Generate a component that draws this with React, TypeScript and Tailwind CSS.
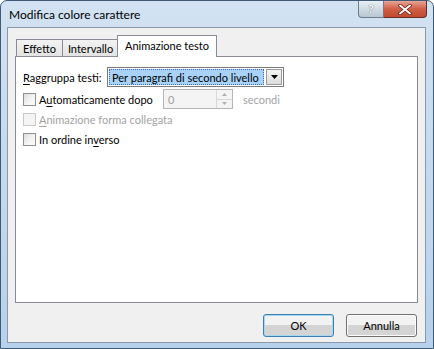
import React from "react";

const font = { fontFamily: 'Lato, "Noto Sans", sans-serif' };

function Check({ disabled, children }: { disabled?: boolean; children: React.ReactNode }) {
  return (
    <div className="flex items-center gap-[3px] whitespace-nowrap">
      <span
        className={`box-border h-[13px] w-[13px] shrink-0 border ${
          disabled
            ? "border-[#c9c9c9] bg-[#f4f4f4]"
            : "border-[#8e8f8f] bg-gradient-to-br from-[#dcdcdc] via-[#f2f2f2] to-[#fbfbfb]"
        }`}
      />
      <span className={disabled ? "text-[#a3a3a3]" : "text-black"}>{children}</span>
    </div>
  );
}

function TabBtn({ label, w, selected }: { label: string; w: number; selected?: boolean }) {
  if (selected) {
    return (
      <div
        className="relative z-10 -mb-px -ml-[2px] flex h-[22px] items-start justify-center whitespace-nowrap border border-b-0 border-[#898c95] bg-white pt-[4px]"
        style={{ width: w }}
      >
        {label}
      </div>
    );
  }
  return (
    <div
      className="-ml-px flex h-[17px] items-center justify-center whitespace-nowrap border border-b-0 border-[#898c95] bg-gradient-to-b from-[#f3f3f3] to-[#e3e3e3] first:ml-0"
      style={{ width: w }}
    >
      {label}
    </div>
  );
}

function DlgButton({ children, focused }: { children: React.ReactNode; focused?: boolean }) {
  return (
    <div
      className={`flex h-[23px] w-[71px] items-center justify-center rounded-[3px] border bg-gradient-to-b from-[#f2f2f2] from-50% to-[#d4d4d4] to-50% ${
        focused ? "border-[#3c7fb1] shadow-[inset_0_0_0_1px_#a6d7f5]" : "border-[#707070] shadow-[inset_0_0_0_1px_#fcfcfc]"
      }`}
    >
      {children}
    </div>
  );
}

export default function App() {
  return (
    <div className="h-[349px] w-[434px] bg-white" style={font}>
      <div className="flex h-[349px] w-[434px] flex-col rounded-t-[7px] border border-[#3f5a75] bg-gradient-to-b from-[#d2e2f2] via-[#c4d9ee] to-[#b7d1ec] text-[11px] leading-none text-black">
        {/* title bar */}
        <div className="flex h-[26px] items-start justify-between pl-[8px] pr-[6px]">
          <div className="whitespace-nowrap pt-[8px] text-[12px] text-black">Modifica colore carattere</div>
          <div className="flex">
            <div className="flex h-[17px] w-[26px] items-center justify-center rounded-bl-[4px] border border-t-0 border-[#6f7c8a] bg-gradient-to-b from-[#e8eef4] to-[#b9c6d3] text-[12px] font-bold text-white [text-shadow:0_0_1px_#333]">
              ?
            </div>
            <div className="flex h-[17px] w-[43px] items-center justify-center rounded-br-[4px] border border-l-0 border-t-0 border-[#6b2b22] bg-gradient-to-b from-[#e6a596] via-[#d05d45] to-[#c24a30]">
              <svg width="14" height="11" viewBox="0 0 14 11">
                <path d="M2 1.5 L12 9.5 M12 1.5 L2 9.5" stroke="#5a1a10" strokeWidth="3.4" strokeLinecap="round" />
                <path d="M2 1.5 L12 9.5 M12 1.5 L2 9.5" stroke="#ffffff" strokeWidth="2" strokeLinecap="round" />
              </svg>
            </div>
          </div>
        </div>
        {/* client area */}
        <div className="ml-[6px] mr-[7px] flex h-[316px] flex-col border border-[#8a98a8] bg-[#f0f0f0]">
          <div className="ml-[7px] mt-[6px] flex w-[403px] flex-col">
            <div className="flex h-[22px] items-end pl-px">
              <TabBtn label="Effetto" w={47} />
              <TabBtn label="Intervallo" w={57} />
              <TabBtn label="Animazione testo" w={100} selected />
            </div>
            <div className="flex h-[247px] flex-col border border-[#898c95] bg-white px-[7px] pt-[10px]">
              <div className="flex h-[20px] items-center whitespace-nowrap">
                <span className="w-[84px]">
                  <span className="underline underline-offset-2">R</span>aggruppa testi:
                </span>
                <div className="flex h-[20px] w-[177px] items-center border border-[#7a7a7a] bg-white p-[1px]">
                  <div className="flex h-full flex-1 items-center border border-dotted border-[#3a6ea5] bg-[#a8d2f8] pl-[2px]">
                    Per paragrafi di secondo livello
                  </div>
                  <div className="ml-[2px] flex h-full w-[16px] items-center justify-center border border-[#9a9a9a] bg-gradient-to-b from-[#f4f4f4] to-[#dcdcdc]">
                    <svg width="7" height="4" viewBox="0 0 7 4">
                      <path d="M0 0 H7 L3.5 4 Z" fill="#000" />
                    </svg>
                  </div>
                </div>
              </div>
              <div className="mt-[2px] flex h-[20px] items-center">
                <div className="w-[140px]">
                  <Check>
                    A<span className="underline underline-offset-2">u</span>tomaticamente dopo
                  </Check>
                </div>
                <div className="flex h-[20px] w-[70px] items-center border border-[#b5b5b5] bg-[#f4f4f4]">
                  <span className="flex-1 pl-[4px] text-[#a0a0a0]">0</span>
                  <div className="flex h-full w-[16px] flex-col border-l border-[#d8d8d8]">
                    <div className="flex flex-1 items-center justify-center border-b border-[#d8d8d8]">
                      <svg width="5" height="3" viewBox="0 0 5 3"><path d="M0 3 H5 L2.5 0 Z" fill="#b0b0b0" /></svg>
                    </div>
                    <div className="flex flex-1 items-center justify-center">
                      <svg width="5" height="3" viewBox="0 0 5 3"><path d="M0 0 H5 L2.5 3 Z" fill="#b0b0b0" /></svg>
                    </div>
                  </div>
                </div>
                <span className="ml-[10px] text-[#a3a3a3]">secondi</span>
              </div>
              <div className="flex h-[20px] items-center">
                <Check disabled>
                  <span className="underline underline-offset-2">A</span>nimazione forma collegata
                </Check>
              </div>
              <div className="flex h-[20px] items-center">
                <Check>
                  In ordine in<span className="underline underline-offset-2">v</span>erso
                </Check>
              </div>
            </div>
          </div>
          <div className="mt-[11px] flex justify-end gap-[12px] pr-[8px]">
            <DlgButton focused>OK</DlgButton>
            <DlgButton>Annulla</DlgButton>
          </div>
        </div>
      </div>
    </div>
  );
}
